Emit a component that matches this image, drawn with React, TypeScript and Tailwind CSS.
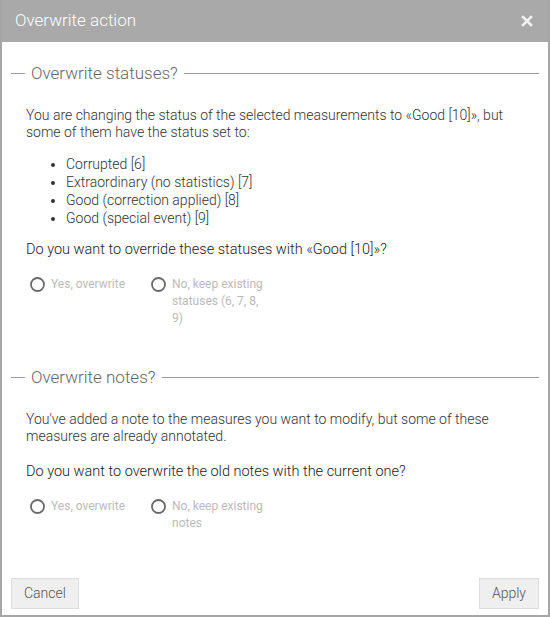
import React from 'react';

const Legend: React.FC<{ title: string }> = ({ title }) => (
  <div className="flex items-center h-[20px]">
    <div className="w-[14px] h-px bg-[#999]" />
    <span className="px-[6px] text-[17px] leading-[20px] font-light text-[#666]">{title}</span>
    <div className="flex-1 h-px bg-[#999]" />
  </div>
);

const Radio: React.FC<{ label: React.ReactNode }> = ({ label }) => (
  <label className="flex items-start w-[121px] gap-[6px] cursor-default">
    <svg width="15" height="15" viewBox="0 0 15 15" className="mt-[1px] shrink-0">
      <circle cx="7.5" cy="7.5" r="6.5" fill="white" stroke="#6a6a6a" strokeWidth="1.8" />
    </svg>
    <span className="text-[12px] leading-[17px] text-[#bbb] w-[98px]">{label}</span>
  </label>
);

const App: React.FC = () => {
  const statuses = [
    'Corrupted [6]',
    'Extraordinary (no statistics) [7]',
    'Good (correction applied) [8]',
    'Good (special event) [9]',
  ];

  return (
    <div
      className="w-[550px] h-[617px] bg-white flex flex-col border-x-2 border-b-2 border-[#a6a6a6] overflow-hidden"
      style={{ fontFamily: 'Roboto, "Liberation Sans", sans-serif' }}
    >
      <div className="h-[42px] shrink-0 -mx-[2px] bg-[#a9a9a9] flex items-center justify-between pl-[15px] pr-[17px]">
        <span className="text-[17px] font-light text-white">Overwrite action</span>
        <svg width="12" height="12" viewBox="0 0 12 12">
          <path d="M2 2 L10 10 M10 2 L2 10" stroke="#f2f2f2" strokeWidth="2.6" strokeLinecap="square" />
        </svg>
      </div>

      <div className="flex-1 px-[9px] text-[14px] text-[#333]">
        <section className="mt-[21px]">
          <Legend title="Overwrite statuses?" />
          <div className="pl-[15px] pr-[10px]">
            <p className="mt-[24px] leading-[17px] font-light">
              You are changing the status of the selected measurements to «Good [10]», but some of them
              have the status set to:
            </p>
            <ul className="mt-[14px] list-disc pl-[40px] leading-[18px] font-light">
              {statuses.map((s) => (
                <li key={s}>{s}</li>
              ))}
            </ul>
            <p className="mt-[14px] text-[14.5px] leading-[17px] font-light text-[#1a1a1a]">
              Do you want to override these statuses with «Good [10]»?
            </p>
            <div className="mt-[18px] pl-[4px] flex">
              <Radio label="Yes, overwrite" />
              <Radio label="No, keep existing statuses (6, 7, 8, 9)" />
            </div>
          </div>
        </section>

        <section className="mt-[40px]">
          <Legend title="Overwrite notes?" />
          <div className="pl-[15px] pr-[10px]">
            <p className="mt-[24px] leading-[17px] font-light">
              You've added a note to the measures you want to modify, but some of these measures are
              already annotated.
            </p>
            <p className="mt-[18px] text-[14.5px] leading-[17px] font-light text-[#1a1a1a]">
              Do you want to overwrite the old notes with the current one?
            </p>
            <div className="mt-[18px] pl-[4px] flex">
              <Radio label="Yes, overwrite" />
              <Radio label="No, keep existing notes" />
            </div>
          </div>
        </section>
      </div>

      <div className="flex justify-between px-[9px] pb-[6px]">
        <button className="h-[31px] px-[12px] bg-[#efefef] border border-[#ddd] text-[14px] font-light text-[#555]">
          Cancel
        </button>
        <button className="h-[31px] px-[12px] bg-[#efefef] border border-[#ddd] text-[14px] font-light text-[#555]">
          Apply
        </button>
      </div>
    </div>
  );
};

export default App;
